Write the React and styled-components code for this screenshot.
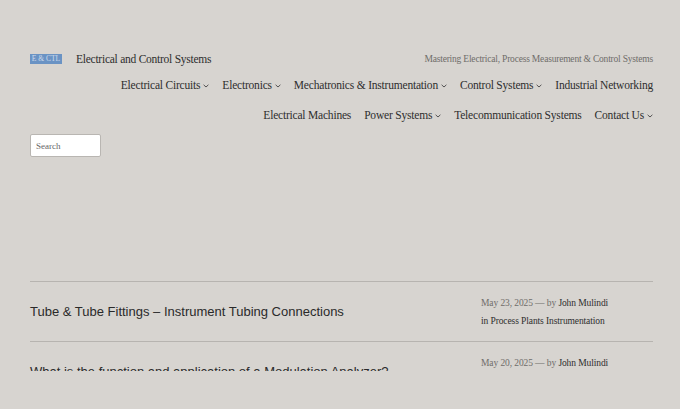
import React from 'react';
import styled, { createGlobalStyle } from 'styled-components';

const GlobalStyle = createGlobalStyle`
  html, body {
    margin: 0;
    padding: 0;
    background: #d7d4d0;
  }
  body {
    font-family: 'Liberation Serif', 'DejaVu Serif', serif;
    color: #333;
  }
`;

const Page = styled.div`
  padding: 0 27px 0 30px;
  height: 371px;
  overflow: hidden;
`;

const Header = styled.header`
  padding-top: 52px;
`;

const TopRow = styled.div`
  display: flex;
  align-items: center;
  justify-content: space-between;
  height: 14px;
`;

const Brand = styled.div`
  display: flex;
  align-items: center;
  gap: 14px;
`;

const Logo = styled.span`
  display: inline-flex;
  align-items: center;
  justify-content: center;
  width: 32px;
  height: 10px;
  background: #6a93c4;
  color: #cfdcec;
  font-size: 7.5px;
  line-height: 1;
`;

const SiteTitle = styled.span`
  font-size: 11.5px;
  letter-spacing: -0.25px;
  color: #2e2e2e;
`;

const Tagline = styled.span`
  font-size: 9.5px;
  letter-spacing: -0.2px;
  color: #6f6d6a;
`;

const Nav = styled.nav`
  display: flex;
  flex-direction: column;
  align-items: flex-end;
  gap: 14px;
  margin-top: 11px;
`;

const NavRow = styled.ul`
  display: flex;
  gap: 13px;
  list-style: none;
  margin: 0;
  padding: 0;
  height: 16px;
  align-items: center;
`;

const NavItem = styled.li`
  display: flex;
  align-items: center;
  gap: 3px;
  font-size: 11.5px;
  letter-spacing: -0.2px;
  color: #2e2e2e;
  white-space: nowrap;
`;

const Chevron = () => (
  <svg width="6" height="4" viewBox="0 0 6 4" style={{ marginTop: 2 }}>
    <path d="M0.6 0.8 L3 3 L5.4 0.8" fill="none" stroke="#444" strokeWidth="0.9" />
  </svg>
);

const SearchInput = styled.input`
  display: block;
  box-sizing: border-box;
  width: 71px;
  height: 23px;
  margin-top: 11px;
  padding: 0 5px;
  border: 1px solid #b9b6b2;
  border-radius: 2px;
  background: #fff;
  font-family: 'Liberation Serif', serif;
  font-size: 9px;
  color: #555;
  &::placeholder {
    color: #666;
  }
`;

const Posts = styled.section`
  margin-top: 124px;
`;

const Post = styled.article`
  display: flex;
  align-items: center;
  border-top: 1px solid #b7b4b0;
  height: 59px;
`;

const PostTitle = styled.h2`
  flex: 1;
  margin: 0;
  font-family: 'Liberation Sans', Arial, sans-serif;
  font-weight: normal;
  font-size: 13px;
  color: #2a2a2a;
`;

const Meta = styled.div`
  width: 172px;
  font-size: 9.5px;
  letter-spacing: -0.1px;
  color: #6f6d6a;
  line-height: 18px;
  align-self: flex-start;
  padding-top: 12px;
`;

const Author = styled.span`
  color: #2e2e2e;
`;

const Category = styled.div`
  color: #2e2e2e;
`;

const navRow1 = [
  ['Electrical Circuits', true],
  ['Electronics', true],
  ['Mechatronics & Instrumentation', true],
  ['Control Systems', true],
  ['Industrial Networking', false],
];

const navRow2 = [
  ['Electrical Machines', false],
  ['Power Systems', true],
  ['Telecommunication Systems', false],
  ['Contact Us', true],
];

const posts = [
  {
    title: 'Tube & Tube Fittings – Instrument Tubing Connections',
    date: 'May 23, 2025',
    author: 'John Mulindi',
    category: 'in Process Plants Instrumentation',
  },
  {
    title: 'What is the function and application of a Modulation Analyzer?',
    date: 'May 20, 2025',
    author: 'John Mulindi',
  },
];

export default function App() {
  return (
    <>
      <GlobalStyle />
      <Page>
        <Header>
          <TopRow>
            <Brand>
              <Logo>E &amp; CTL</Logo>
              <SiteTitle>Electrical and Control Systems</SiteTitle>
            </Brand>
            <Tagline>Mastering Electrical, Process Measurement &amp; Control Systems</Tagline>
          </TopRow>
          <Nav>
            {[navRow1, navRow2].map((row, i) => (
              <NavRow key={i}>
                {row.map(([label, sub]) => (
                  <NavItem key={label}>
                    {label}
                    {sub && <Chevron />}
                  </NavItem>
                ))}
              </NavRow>
            ))}
          </Nav>
          <SearchInput placeholder="Search" />
        </Header>
        <Posts>
          {posts.map((p) => (
            <Post key={p.title}>
              <PostTitle>{p.title}</PostTitle>
              <Meta>
                {p.date} — by <Author>{p.author}</Author>
                {p.category && <Category>{p.category}</Category>}
              </Meta>
            </Post>
          ))}
        </Posts>
      </Page>
    </>
  );
}
